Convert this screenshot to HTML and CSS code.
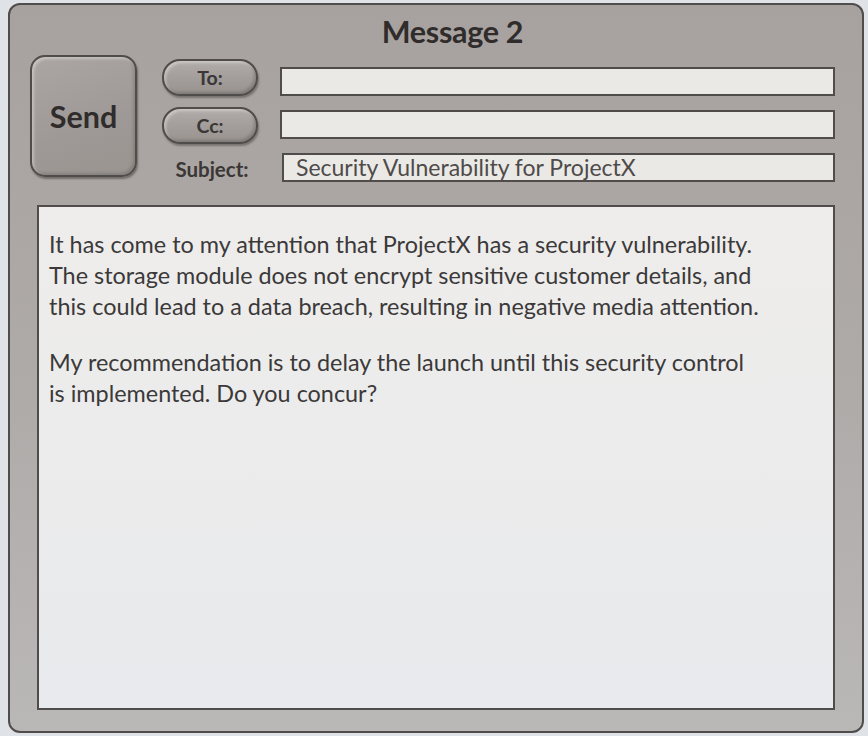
FILE: index.html
```html
<!DOCTYPE html>
<html>
<head>
<meta charset="utf-8">
<link rel="stylesheet" href="styles.css">
</head>
<body>
<div class="window">
  <div class="title">Message 2</div>
  <div class="header">
    <div class="send">Send</div>
    <div class="fields">
      <div class="pill">To:</div>
      <div class="field to"></div>
      <div class="pill">Cc:</div>
      <div class="field cc"></div>
      <div class="label">Subject:</div>
      <div class="field subject">Security Vulnerability for ProjectX</div>
    </div>
  </div>
  <div class="message">
    <p>It has come to my attention that ProjectX has a security vulnerability.<br>The storage module does not encrypt sensitive customer details, and<br>this could lead to a data breach, resulting in negative media attention.</p>
    <p>My recommendation is to delay the launch until this security control<br>is implemented. Do you concur?</p>
  </div>
</div>
</body>
</html>
```

FILE: styles.css
```css
html, body {
  margin: 0;
  padding: 0;
}
body {
  background: #dfe3e8;
  width: 868px;
  height: 736px;
  overflow: hidden;
  font-family: Lato, "Open Sans", sans-serif;
}
.window {
  box-sizing: border-box;
  margin: 3px 0 0 8px;
  width: 856px;
  height: 730px;
  border: 2px solid #4f4c4b;
  border-radius: 12px;
  background: linear-gradient(180deg, #a7a29f 0%, #aeaaa8 50%, #bab7b7 100%);
  display: flex;
  flex-direction: column;
  padding: 0 27px 0 20px;
}
.title {
  text-align: center;
  font-size: 30.5px;
  font-weight: 700;
  color: #2f2c2b;
  line-height: 34px;
  margin-top: 9px;
  padding-left: 40px;
  letter-spacing: -0.3px;
}
.header {
  display: flex;
  align-items: flex-start;
  height: 122px;
  margin-top: 7px;
}
.send {
  box-sizing: border-box;
  width: 107px;
  height: 122px;
  border: 2px solid #4f4c4b;
  border-radius: 15px;
  background: linear-gradient(160deg, #aba6a3 0%, #9e9996 60%, #99948f 100%);
  box-shadow: inset 2px 2px 3px rgba(255,255,255,0.35), inset -2px -2px 3px rgba(0,0,0,0.15), 1px 2px 2px rgba(0,0,0,0.35);
  display: flex;
  align-items: center;
  justify-content: center;
  font-size: 30.5px;
  font-weight: 700;
  color: #2f2c2b;
}
.fields {
  flex: 1;
  display: grid;
  grid-template-columns: 96px 1fr;
  grid-template-rows: 37px 37px 30px;
  column-gap: 22px;
  row-gap: 11px;
  align-items: center;
  margin-left: 25px;
  margin-top: 4px;
}
.pill {
  box-sizing: border-box;
  height: 37px;
  border: 2px solid #4f4c4b;
  border-radius: 18px;
  background: linear-gradient(180deg, #b1aca9 0%, #a29d9a 55%, #98938f 100%);
  box-shadow: inset 2px 2px 3px rgba(255,255,255,0.35), inset -2px -2px 3px rgba(0,0,0,0.18), 1px 2px 2px rgba(0,0,0,0.3);
  display: flex;
  align-items: center;
  justify-content: center;
  font-size: 19.5px;
  font-weight: 700;
  color: #3a3736;
}
.label {
  text-align: center;
  font-size: 20.5px;
  font-weight: 700;
  color: #3a3736;
  padding-left: 4px;
  margin-top: -2px;
}
.field {
  box-sizing: border-box;
  height: 29px;
  border: 2px solid #4f4c4b;
  background: #ebe9e5;
}
.field.to {
  margin-top: 8px;
}
.field.cc {
  margin-top: -2px;
}
.field.subject {
  margin-top: -6px;
  margin-left: 2px;
  font-size: 23px;
  color: #4e4b4a;
  line-height: 25px;
  padding-left: 12px;
  white-space: nowrap;
}
.message {
  box-sizing: border-box;
  margin-top: 28px;
  margin-left: 7px;
  width: 798px;
  height: 505px;
  border: 2px solid #4f4c4b;
  background: linear-gradient(180deg, #eeedeb 0%, #ebebec 60%, #e8eaed 100%);
  padding: 22px 0 0 10px;
  color: #3b3939;
  font-size: 23.4px;
  line-height: 31px;
}
.message p {
  margin: 0 0 25px 0;
}
```
